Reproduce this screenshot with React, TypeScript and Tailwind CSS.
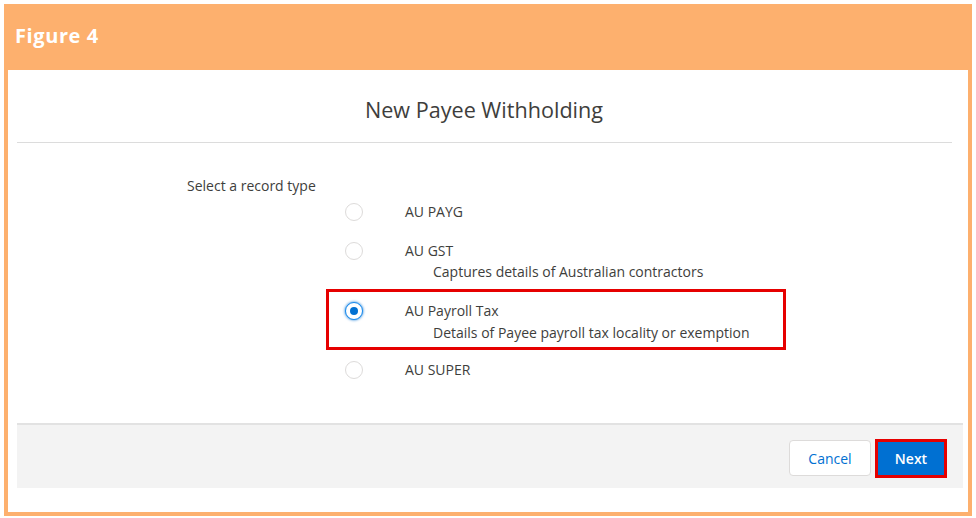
const font = { fontFamily: "'Open Sans', 'Noto Sans', sans-serif" };

type Option = {
  label: string;
  desc?: string;
  checked?: boolean;
  rowClass: string;
};

const options: Option[] = [
  { label: "AU PAYG", rowClass: "h-[39px] pt-[6px]" },
  {
    label: "AU GST",
    desc: "Captures details of Australian contractors",
    rowClass: "h-[57px] pt-[6px]",
  },
  {
    label: "AU Payroll Tax",
    desc: "Details of Payee payroll tax locality or exemption",
    checked: true,
    rowClass: "h-[61px] pt-[9px]",
  },
  { label: "AU SUPER", rowClass: "h-[40px] pt-[7px]" },
];

function Radio({ checked }: { checked?: boolean }) {
  if (checked) {
    return (
      <span className="mt-px flex h-[18px] w-[18px] shrink-0 items-center justify-center rounded-full border border-[#1589ee] bg-white shadow-[0_0_3px_#0070d2]">
        <span className="h-[8px] w-[8px] rounded-full bg-[#0070d2]" />
      </span>
    );
  }
  return (
    <span className="mt-px block h-[18px] w-[18px] shrink-0 rounded-full border border-[#dddbda] bg-white" />
  );
}

export default function App() {
  return (
    <div className="h-[518px] w-[976px] bg-white pl-[4px] pt-[4px]" style={font}>
      <div className="flex w-[968px] flex-col">
        {/* Figure header */}
        <div className="flex h-[66px] items-center bg-[#fdb06e] pb-[3px] pl-[11px]">
          <span className="text-[20px] font-bold tracking-[0.6px] text-white">Figure 4</span>
        </div>

        {/* Modal body */}
        <div className="flex h-[446px] flex-col border-x-[4px] border-b-[4px] border-[#fdb06e] bg-white">
          <div className="flex h-[72px] items-center justify-center pr-[8px] pt-[9px]">
            <h2 className="text-[21.6px] text-[#3e3e3c]">New Payee Withholding</h2>
          </div>
          <div className="ml-[9px] h-px w-[935px] bg-[#dcdcdc]" />

          <div className="flex h-[280px] flex-col">
            <p className="ml-[179px] mt-[36px] text-[14px] leading-[14px] text-[#3e3e3c]">
              Select a record type
            </p>
            <div className="ml-[318px] flex w-[460px] flex-col">
              {options.map((o) => (
                <div
                  key={o.label}
                  className={`flex border-[3px] pl-[16px] ${o.rowClass} ${
                    o.checked ? "border-[#e60000]" : "border-transparent"
                  }`}
                >
                  <Radio checked={o.checked} />
                  <div className="ml-[42px] flex flex-col text-[14px] leading-[20px] text-[#3e3e3c]">
                    <span>{o.label}</span>
                    {o.desc && (
                      <span className={`ml-[28px] ${o.checked ? "mt-[2px]" : "mt-px"}`}>
                        {o.desc}
                      </span>
                    )}
                  </div>
                </div>
              ))}
            </div>
          </div>

          {/* Footer */}
          <div className="ml-[9px] flex h-[65px] w-[946px] items-center justify-end gap-[4px] border-t-[2px] border-[#e2e2e2] bg-[#f3f3f3] pr-[16px] pt-[3px]">
            <button className="h-[36px] w-[82px] rounded-[4px] border border-[#dddbda] bg-white text-[14px] text-[#0070d2]">
              Cancel
            </button>
            <div className="border-[3px] border-[#e60000]">
              <button className="block h-[33px] w-[66px] bg-[#0070d2] text-[14px] font-semibold text-white">
                Next
              </button>
            </div>
          </div>
        </div>
      </div>
    </div>
  );
}
